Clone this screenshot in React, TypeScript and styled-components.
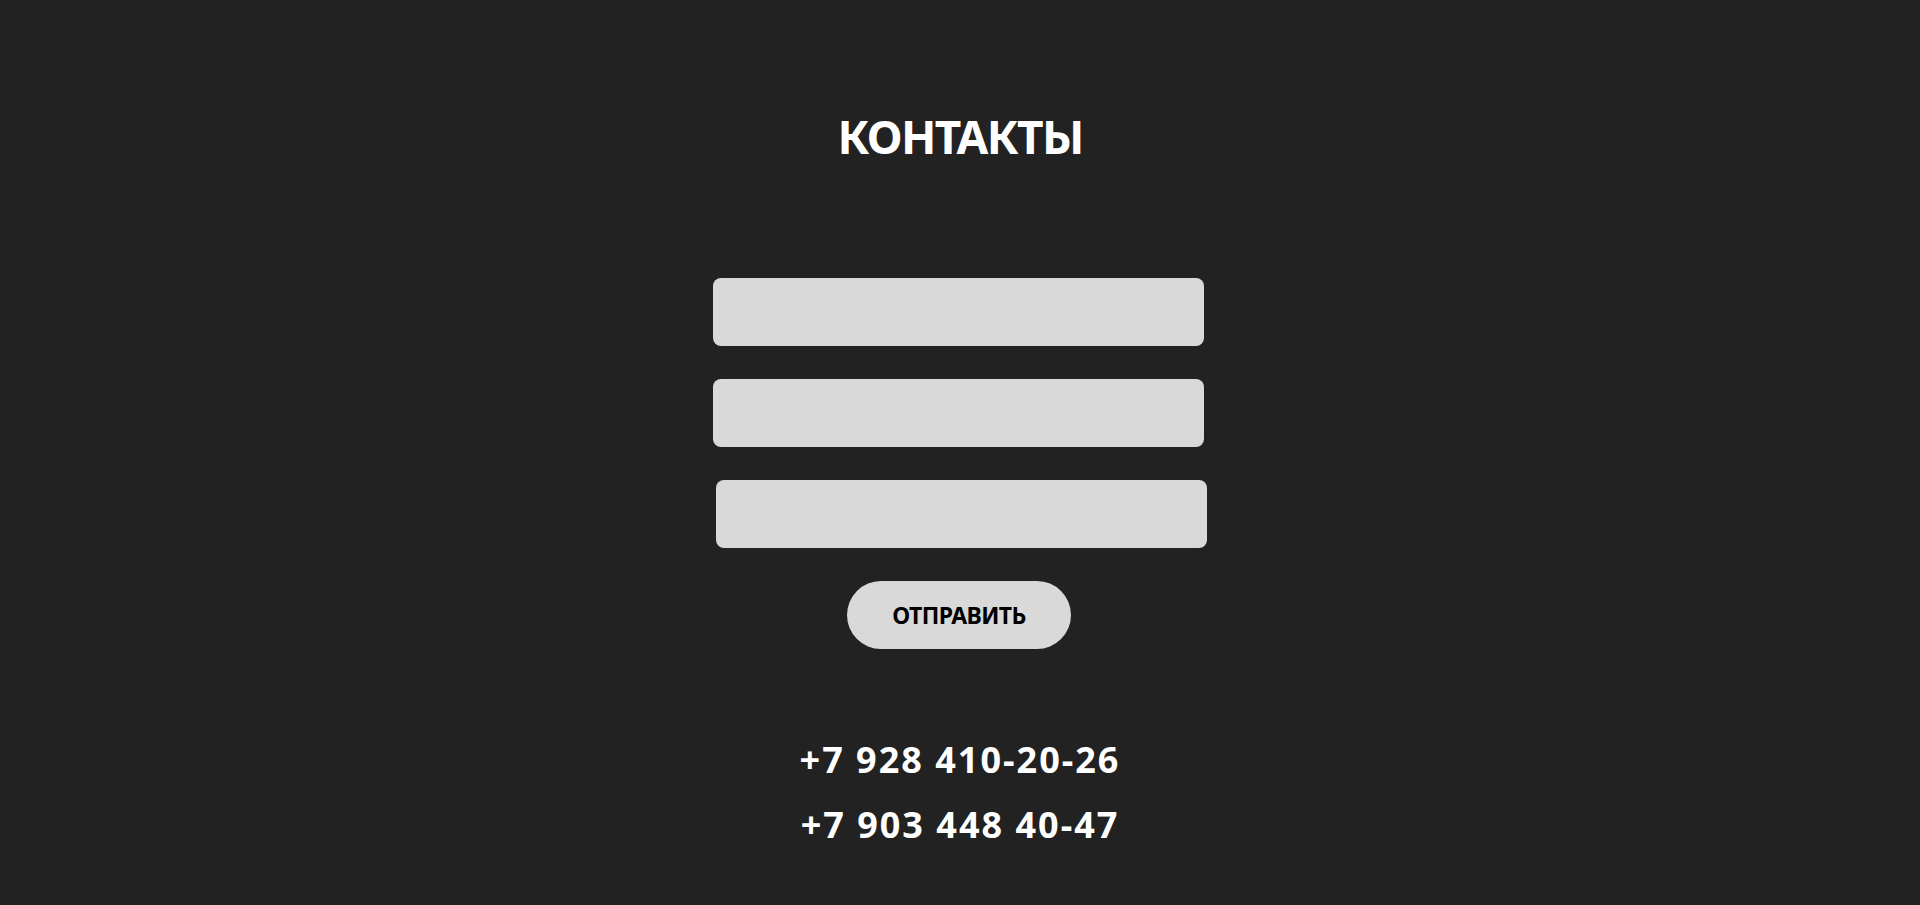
import React from "react";
import styled, { createGlobalStyle } from "styled-components";

const Global = createGlobalStyle`
  html, body { margin: 0; padding: 0; background: #222222; }
  body { font-family: "Noto Sans", "Open Sans", sans-serif; }
  * { box-sizing: border-box; }
`;

const Page = styled.main`
  min-height: 905px;
  background: #222222;
  display: flex;
  flex-direction: column;
  align-items: center;
  padding-top: 108px;
`;

const Title = styled.h1`
  margin: 0;
  color: #ffffff;
  font-size: 46px;
  line-height: 56px;
  font-weight: 700;
  letter-spacing: -1.6px;
`;

const Form = styled.form`
  margin-top: 114px;
  margin-left: -2px;
  display: flex;
  flex-direction: column;
  align-items: center;
  gap: 33px;
`;

const Input = styled.input<{ $shift?: number }>`
  width: 491px;
  height: 68px;
  border: none;
  outline: none;
  border-radius: 8px;
  background: #d9d9d9;
  margin-left: ${(p) => (p.$shift ?? 0) * 2}px;
  margin-right: 1px;
  font-family: inherit;
  font-size: 18px;
  padding: 0 20px;
`;

const Button = styled.button`
  width: 224px;
  height: 68px;
  border: none;
  border-radius: 34px;
  background: #d9d9d9;
  color: #000000;
  font-family: inherit;
  font-size: 23px;
  font-weight: 700;
  letter-spacing: -0.6px;
  cursor: pointer;
  padding: 0;
`;

const Phones = styled.div`
  margin-top: 78px;
  display: flex;
  flex-direction: column;
  align-items: center;
  color: #ffffff;
  font-size: 36px;
  font-weight: 700;
  letter-spacing: 2px;
  line-height: 65px;
`;

export default function App() {
  return (
    <>
      <Global />
      <Page>
        <Title>КОНТАКТЫ</Title>
        <Form onSubmit={(e) => e.preventDefault()}>
          <Input type="text" />
          <Input type="tel" />
          <Input type="email" $shift={3} />
          <Button type="submit">ОТПРАВИТЬ</Button>
        </Form>
        <Phones>
          <span>+7 928 410-20-26</span>
          <span>+7 903 448 40-47</span>
        </Phones>
      </Page>
    </>
  );
}
